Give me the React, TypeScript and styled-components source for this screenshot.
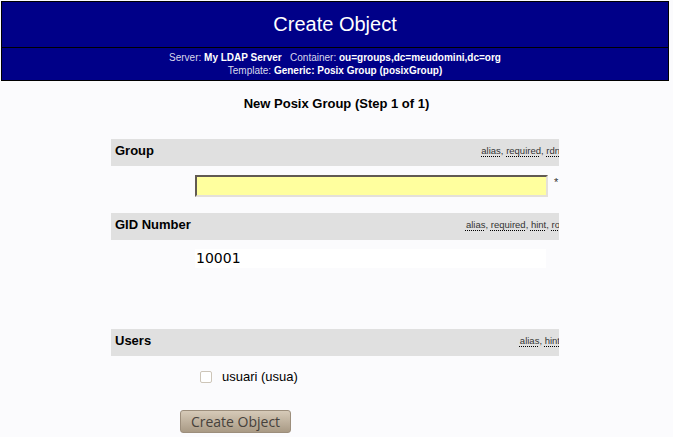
import React from 'react';
import styled, {createGlobalStyle} from "styled-components";

const GlobalStyle = createGlobalStyle`
  body {
    margin: 0;
    background: #fbfbfd;
    font-family: "Liberation Sans", Arial, sans-serif;
    color: #000;
  }
`

type MetaProps = {
    items: string[]
}

const Meta = ({items}: MetaProps) => (
    <MetaText>
        {items.map((item, i) => (
            <React.Fragment key={item}>
                <Abbr>{item}</Abbr>{i < items.length - 1 ? ', ' : ''}
            </React.Fragment>
        ))}
    </MetaText>
)

const App = () => {
    return (
        <Page>
            <GlobalStyle/>
            <Header>
                <TitleBar>Create Object</TitleBar>
                <Info>
                    <div>
                        Server: <b>My LDAP Server</b>&nbsp;&nbsp;&nbsp;Container: <b>ou=groups,dc=meudomini,dc=org</b>
                    </div>
                    <div>
                        Template: <b>Generic: Posix Group (posixGroup)</b>
                    </div>
                </Info>
            </Header>

            <StepTitle>New Posix Group (Step 1 of 1)</StepTitle>

            <Form>
                <Bar>
                    <Label>Group</Label>
                    <Meta items={['alias', 'required', 'rdn']}/>
                </Bar>
                <FieldRow gap={9}>
                    <TextInput type="text" defaultValue=""/>
                    <Star>*</Star>
                </FieldRow>

                <Bar top={16}>
                    <Label>GID Number</Label>
                    <Meta items={['alias', 'required', 'hint', 'ro']}/>
                </Bar>
                <FieldRow gap={9}>
                    <ValueBox>10001</ValueBox>
                </FieldRow>

                <Bar top={61}>
                    <Label>Users</Label>
                    <Meta items={['alias', 'hint']}/>
                </Bar>
                <CheckRow>
                    <Check type="checkbox"/>
                    <CheckLabel>usuari (usua)</CheckLabel>
                </CheckRow>

                <SubmitRow>
                    <SubmitButton>Create Object</SubmitButton>
                </SubmitRow>
            </Form>
        </Page>
    );
};

export default App;

const Page = styled.div`
  padding: 1px;
`
const Header = styled.div`
  width: 668px;
  box-sizing: border-box;
  border: 1px solid #000;
  background: #000088;
  color: #fff;
`
const TitleBar = styled.div`
  height: 45px;
  display: flex;
  align-items: center;
  justify-content: center;
  font-size: 20px;
  border-bottom: 1px solid #000;
`
const Info = styled.div`
  padding: 3px 0;
  text-align: center;
  font-size: 10px;
  line-height: 13px;
  color: #d8d8ec;

  b {
    color: #fff;
  }
`
const StepTitle = styled.div`
  margin-top: 15px;
  text-align: center;
  font-size: 13px;
  font-weight: bold;
  line-height: 16px;
`
const Form = styled.div`
  width: 448px;
  margin: 27px 0 0 110px;
`
type BarType = {
    top?: number
}
const Bar = styled.div<BarType>`
  margin-top: ${({top}) => top ?? 0}px;
  height: 27px;
  box-sizing: border-box;
  padding: 0 0 4px 4px;
  background: #e0e0e0;
  display: flex;
  align-items: center;
  justify-content: space-between;
  overflow: hidden;
`
const Label = styled.span`
  font-size: 13px;
  font-weight: bold;
  white-space: nowrap;
`
const MetaText = styled.span`
  font-size: 9.5px;
  color: #333;
  white-space: nowrap;
  margin-right: -1px;
`
const Abbr = styled.abbr`
  text-decoration: underline dotted #000;
  text-underline-offset: 2px;
`
type FieldRowType = {
    gap: number
}
const FieldRow = styled.div<FieldRowType>`
  margin-top: ${({gap}) => gap}px;
  padding-left: 84px;
  display: flex;
  align-items: flex-start;
`
const TextInput = styled.input`
  width: 353px;
  height: 22px;
  box-sizing: border-box;
  margin: 0;
  border-style: solid;
  border-width: 2px;
  border-color: #615a52 #e4e0da #e4e0da #615a52;
  background: #ffff9e;
  outline: none;
`
const Star = styled.span`
  margin-left: 6px;
  font-size: 11px;
  line-height: 14px;
  color: #333;
`
const ValueBox = styled.div`
  width: 350px;
  height: 19px;
  background: #fff;
  padding-left: 1px;
  font-family: "DejaVu Sans", sans-serif;
  font-size: 14px;
  line-height: 19px;
`
const CheckRow = styled.div`
  margin-top: 13px;
  height: 16px;
  padding-left: 89px;
  display: flex;
  align-items: center;
  gap: 10px;
`
const Check = styled.input`
  appearance: none;
  margin: 0;
  width: 12px;
  height: 12px;
  box-sizing: border-box;
  border: 1px solid #cdc5b8;
  border-radius: 2px;
  background: #fff;
`
const CheckLabel = styled.span`
  font-size: 13px;
  line-height: 14px;
  margin-top: -1px;
`
const SubmitRow = styled.div`
  margin-top: 25px;
  padding-left: 69px;
`
const SubmitButton = styled.button`
  width: 111px;
  height: 23px;
  padding: 0;
  border: 1px solid #9c8e7c;
  border-radius: 3px;
  background: linear-gradient(#d6cab8, #a99a85);
  font-family: "Open Sans", sans-serif;
  font-size: 14px;
  color: #46413b;
  line-height: 20px;
`
